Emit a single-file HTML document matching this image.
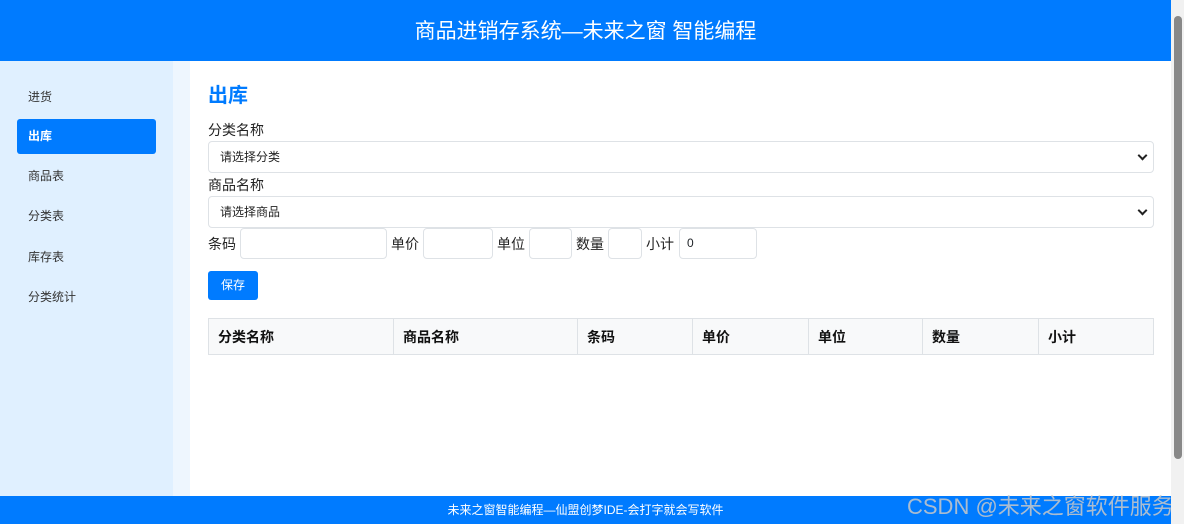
<!DOCTYPE html>
<html><head><meta charset="utf-8"><style>
*{box-sizing:border-box;margin:0;padding:0}
body{width:1184px;height:524px;overflow:hidden;font-family:"Liberation Sans","Noto Sans CJK SC",sans-serif;color:#212529;background:#fff;position:relative}
.hdr{position:absolute;left:0;top:0;width:1171px;height:61px;background:#007bff;color:#fff;font-size:21px;text-align:center;line-height:64px}
.side{position:absolute;left:0;top:61px;width:173px;height:435px;background:#e0f0ff}
.gap{position:absolute;left:173px;top:61px;width:17px;height:435px;background:#eef6fe}
.main{position:absolute;left:190px;top:63px;width:981px;height:433px;background:#fff;border-radius:6px 0 0 0}
.nav{position:absolute;left:17px;width:139px;height:35px;font-size:12px;line-height:35px;padding-left:11px;color:#333}
.nav.act{background:#007bff;color:#fff;border-radius:3px;font-weight:bold}
h1{position:absolute;left:208px;top:79px;font-size:20px;color:#007bff;font-weight:bold}
.lbl{position:absolute;font-size:14px;color:#222}
.sel{position:absolute;left:208px;width:946px;height:32px;border:1px solid #dee2e6;border-radius:4px;font-size:12px;line-height:30px;padding-left:11px;color:#222}
.sel::after{content:"";position:absolute;right:7px;top:10px;width:5px;height:5px;border-right:2px solid #222;border-bottom:2px solid #222;transform:rotate(45deg)}
.in{position:absolute;top:228px;height:31px;border:1px solid #dee2e6;border-radius:4px;font-size:12px;line-height:29px;padding-left:7px}
.btn{position:absolute;left:208px;top:271px;width:50px;height:29px;background:#007bff;color:#fff;border-radius:3px;font-size:12px;text-align:center;line-height:29px}
table{position:absolute;left:208px;top:318px;width:946px;border-collapse:collapse;background:#f8f9fa}
td{border:1px solid #dee2e6;height:36px;font-size:14px;font-weight:bold;padding-left:9px;color:#111}
.ftr{position:absolute;left:0;top:496px;width:1171px;height:28px;background:#007bff;color:#fff;font-size:12px;text-align:center;line-height:28px}
.wm{position:absolute;left:907px;top:489px;font-size:22px;color:rgba(200,200,200,.85);white-space:nowrap}
.sb{position:absolute;left:1171px;top:0;width:13px;height:524px;background:#f1f1f1}
.th{position:absolute;left:1174px;top:16px;width:8px;height:443px;background:#888;border-radius:4px}
</style></head><body>
<div class="hdr">商品进销存系统—未来之窗 智能编程</div>
<div class="side"></div><div class="gap"></div><div class="main"></div>
<div class="nav" style="top:80px">进货</div>
<div class="nav act" style="top:119px">出库</div>
<div class="nav" style="top:159px">商品表</div>
<div class="nav" style="top:199px">分类表</div>
<div class="nav" style="top:240px">库存表</div>
<div class="nav" style="top:280px">分类统计</div>
<h1>出库</h1>
<div class="lbl" style="left:208px;top:120px">分类名称</div>
<div class="sel" style="top:141px">请选择分类</div>
<div class="lbl" style="left:208px;top:175px">商品名称</div>
<div class="sel" style="top:196px">请选择商品</div>
<div class="lbl" style="left:208px;top:234px">条码</div><div class="in" style="left:240px;width:147px"></div>
<div class="lbl" style="left:391px;top:234px">单价</div><div class="in" style="left:423px;width:70px"></div>
<div class="lbl" style="left:497px;top:234px">单位</div><div class="in" style="left:529px;width:43px"></div>
<div class="lbl" style="left:576px;top:234px">数量</div><div class="in" style="left:608px;width:34px"></div>
<div class="lbl" style="left:646px;top:234px">小计</div><div class="in" style="left:679px;width:78px">0</div>
<div class="btn">保存</div>
<table><tr><td style="width:185px">分类名称</td><td style="width:184px">商品名称</td><td style="width:115px">条码</td><td style="width:116px">单价</td><td style="width:114px">单位</td><td style="width:116px">数量</td><td>小计</td></tr></table>
<div class="ftr">未来之窗智能编程—仙盟创梦IDE-会打字就会写软件</div>
<div class="wm">CSDN @未来之窗软件服务</div>
<div class="sb"></div><div class="th"></div>
</body></html>
